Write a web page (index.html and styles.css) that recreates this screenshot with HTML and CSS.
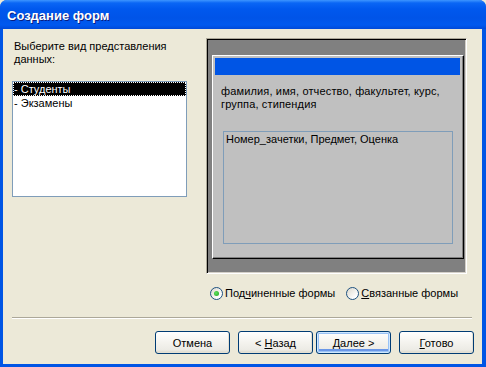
FILE: index.html
```html
<!DOCTYPE html>
<html lang="ru">
<head>
  <meta charset="UTF-8" />
  <title>Создание форм</title>
  <link rel="stylesheet" href="styles.css">
</head>
<body>
  <div class="window">
    <div class="titlebar">
      <span class="title">Создание форм</span>
    </div>

    <div class="client">
      <div class="main">
        <div class="left">
          <p class="prompt">Выберите вид представления данных:</p>
          <ul class="listbox">
            <li class="selected">- Студенты</li>
            <li>- Экзамены</li>
          </ul>
        </div>

        <div class="right">
          <div class="preview">
            <div class="form-frame">
              <div class="caption-bar"></div>
              <p class="fields">фамилия, имя, отчество, факультет, курс, группа, стипендия</p>
              <div class="subform">Номер_зачетки, Предмет, Оценка</div>
            </div>
          </div>

          <div class="options">
            <label class="radio checked"><span class="dot"></span><span>Под<u>ч</u>иненные формы</span></label>
            <label class="radio"><span class="dot"></span><span><u>С</u>вязанные формы</span></label>
          </div>
        </div>
      </div>

      <div class="separator"></div>

      <div class="buttons">
        <button class="btn">Отмена</button>
        <button class="btn back">&lt; <u>Н</u>азад</button>
        <button class="btn default"><u>Д</u>алее &gt;</button>
        <button class="btn"><u>Г</u>отово</button>
      </div>
    </div>
  </div>
</body>
</html>
```

FILE: styles.css
```css
body {
  margin: 0;
  padding: 0;
  font-family: "Liberation Sans", Arial, sans-serif;
  font-size: 11px;
  color: #000;
  background: #ece9d8;
}
.window {
  width: 486px;
  height: 367px;
  background: #0055e5;
  border-radius: 7px 7px 0 0;
  display: flex;
  flex-direction: column;
  overflow: hidden;
}
.titlebar {
  height: 29px;
  flex: none;
  background: linear-gradient(#3d95ff 0, #0a66f5 3px, #0058ee 9px, #0054e8 18px, #0059ef 25px, #0049d8 29px);
  display: flex;
  align-items: center;
  padding-left: 7px;
}
.title {
  color: #fff;
  font-weight: bold;
  font-size: 13px;
  text-shadow: 1px 1px #0a1d80;
  margin-top: 1px;
}
.client {
  flex: 1;
  margin: 0 4px 3px 3px;
  background: #ece9d8;
  display: flex;
  flex-direction: column;
}
.main {
  display: flex;
  gap: 19px;
  padding: 9px 0 0 9px;
}
.left {
  width: 175px;
}
.prompt {
  margin: 2px 0 0 2px;
  line-height: 13px;
}
.listbox {
  list-style: none;
  margin: 15px 0 0 0;
  padding: 0;
  width: 173px;
  height: 114px;
  border: 1px solid #7f9db9;
  background: #fff;
}
.listbox li {
  height: 14px;
  line-height: 14px;
  padding-left: 1px;
  white-space: nowrap;
}
.listbox li.selected {
  background: #000;
  color: #fff;
  outline: 1px dotted #fff;
  outline-offset: -1px;
}
.right {
  width: 261px;
}
.preview {
  width: 254px;
  height: 218px;
  padding: 16px 0 0 5px;
  background: #808080;
  border-top: 1px solid #aca899;
  border-left: 1px solid #aca899;
  border-right: 1px solid #fff;
  border-bottom: 1px solid #fff;
  box-shadow: inset 1px 1px #000, inset -1px -1px #d4d0c8;
}
.form-frame {
  width: 250px;
  height: 202px;
  background: #c0c0c0;
  border: 1px solid;
  border-color: #fff #000 #000 #fff;
  box-shadow: inset -1px -1px #808080;
}
.caption-bar {
  height: 17px;
  margin: 2px 3px 0 2px;
  background: #0055e5;
}
.fields {
  margin: 10px 10px 0 8px;
  line-height: 13px;
  letter-spacing: 0.15px;
}
.subform {
  width: 226px;
  height: 110px;
  margin: 20px 0 0 10px;
  border: 1px solid #7f9db9;
  padding: 1px 0 0 2px;
  line-height: 13px;
}
.options {
  display: flex;
  align-items: center;
  margin: 13px 0 0 4px;
  line-height: 13px;
  gap: 11px;
}
.radio {
  display: flex;
  align-items: center;
  gap: 2px;
  white-space: nowrap;
}
.dot {
  width: 11px;
  height: 11px;
  border: 1px solid #1c5180;
  border-radius: 50%;
  background: linear-gradient(135deg, #dcd9cd, #fff 80%);
  display: flex;
  align-items: center;
  justify-content: center;
}
.radio.checked .dot::after {
  content: "";
  width: 5px;
  height: 5px;
  border-radius: 50%;
  background: radial-gradient(circle at 40% 40%, #5ee25e, #21a121);
}
.separator {
  margin: 17px 10px 0 9px;
  height: 1px;
  background: #aca899;
  border-bottom: 1px solid #fff;
}
.buttons {
  display: flex;
  justify-content: flex-end;
  gap: 8px;
  padding-right: 8px;
  margin-top: 12px;
}
.btn {
  width: 75px;
  height: 23px;
  padding: 0;
  font-family: "Liberation Sans", Arial, sans-serif;
  font-size: 11px;
  color: #000;
  border: 1px solid #003c74;
  border-radius: 3px;
  background: linear-gradient(#fff, #f4f3ee 50%, #ecebe5 85%, #d8d4c6);
  box-shadow: inset -1px -1px #e3e0d3;
}
.btn.back {
  margin-right: -5px;
}
.btn.default {
  box-shadow: inset 0 0 0 1px #cee7ff, inset 0 0 0 2px #99c2f5, inset 0 -2px 0 2px #6a97e8;
}
```
